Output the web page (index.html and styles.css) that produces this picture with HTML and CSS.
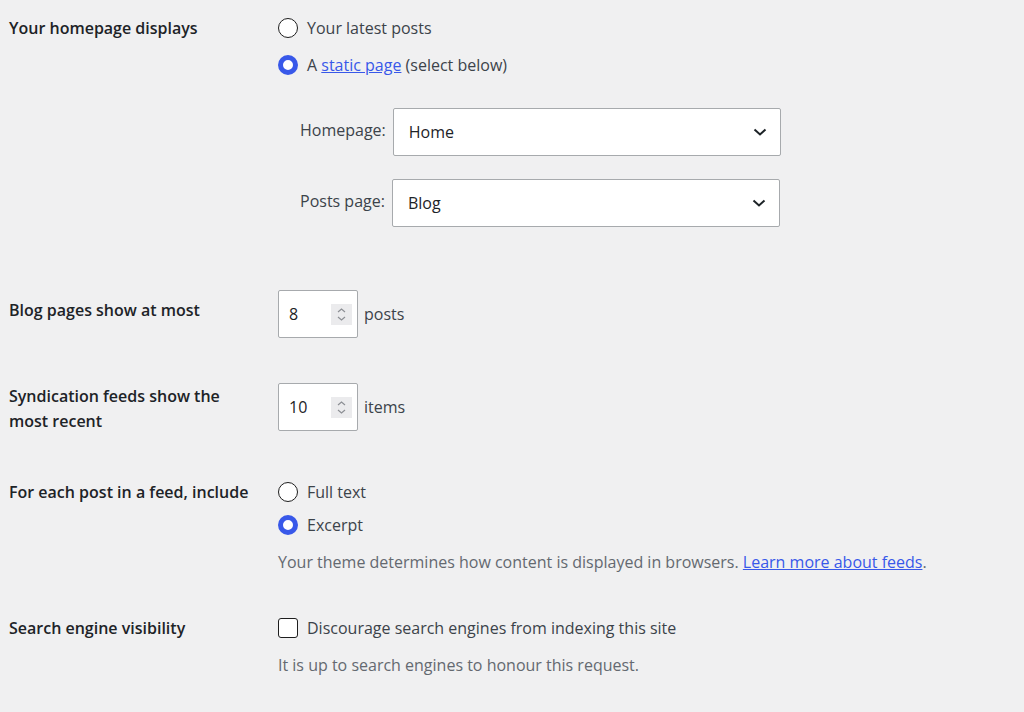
FILE: index.html
```html
<!DOCTYPE html>
<html lang="en">
<head>
    <meta charset="UTF-8">
    <title>Reading Settings</title>
    <link rel="stylesheet" href="styles.css">
</head>
<body>
    <div class="settings">

        <!-- Homepage -->
        <div class="row row-home">
            <div class="label">Your homepage displays</div>
            <div class="field">
                <div class="options">
                    <div class="option"><span class="radio"></span>Your latest posts</div>
                    <div class="option"><span class="radio checked"></span>A&nbsp;<a href="#">static page</a>&nbsp;(select below)</div>
                </div>
                <div class="page-selects">
                    <div class="page-select">
                        <span class="select-label">Homepage:</span>
                        <div class="select">
                            <span>Home</span>
                            <svg width="16" height="16" viewBox="0 0 16 16"><path d="M2.5 5.5 L8 10.5 L13.5 5.5" fill="none" stroke="#1d2327" stroke-width="2"/></svg>
                        </div>
                    </div>
                    <div class="page-select">
                        <span class="select-label">Posts page:</span>
                        <div class="select">
                            <span>Blog</span>
                            <svg width="16" height="16" viewBox="0 0 16 16"><path d="M2.5 5.5 L8 10.5 L13.5 5.5" fill="none" stroke="#1d2327" stroke-width="2"/></svg>
                        </div>
                    </div>
                </div>
            </div>
        </div>

        <!-- Blog pages -->
        <div class="row row-blog">
            <div class="label label-low">Blog pages show at most</div>
            <div class="field inline">
                <div class="number">
                    <span>8</span>
                    <span class="spinner">
                        <svg width="21" height="21" viewBox="0 0 21 21"><path d="M7 8 L10.5 5 L14 8 M7 13 L10.5 16 L14 13" fill="none" stroke="#8c8f94" stroke-width="1.2"/></svg>
                    </span>
                </div>
                <span>posts</span>
            </div>
        </div>

        <!-- Feeds -->
        <div class="row row-feeds">
            <div class="label">Syndication feeds show the most recent</div>
            <div class="field inline">
                <div class="number">
                    <span>10</span>
                    <span class="spinner">
                        <svg width="21" height="21" viewBox="0 0 21 21"><path d="M7 8 L10.5 5 L14 8 M7 13 L10.5 16 L14 13" fill="none" stroke="#8c8f94" stroke-width="1.2"/></svg>
                    </span>
                </div>
                <span>items</span>
            </div>
        </div>

        <!-- Feed content -->
        <div class="row row-include">
            <div class="label">For each post in a feed, include</div>
            <div class="field">
                <div class="options tight">
                    <div class="option"><span class="radio"></span>Full text</div>
                    <div class="option"><span class="radio checked"></span>Excerpt</div>
                </div>
                <p class="description">Your theme determines how content is displayed in browsers. <a href="#">Learn more about feeds</a>.</p>
            </div>
        </div>

        <!-- Search engines -->
        <div class="row row-search">
            <div class="label">Search engine visibility</div>
            <div class="field">
                <div class="option"><span class="checkbox"></span>Discourage search engines from indexing this site</div>
                <p class="description">It is up to search engines to honour this request.</p>
            </div>
        </div>

    </div>
</body>
</html>
```

FILE: styles.css
```css
body {
    margin: 0;
    background-color: #f0f0f1;
    color: #3c434a;
    font-family: "Open Sans", "Noto Sans", sans-serif;
    font-size: 16px;
}
a {
    color: #3858e9;
}
.settings {
    padding: 0 9px;
}
.row {
    display: grid;
    grid-template-columns: 269px 1fr;
}
.label {
    color: #1d2327;
    font-weight: 600;
    line-height: 25px;
    width: 240px;
}
.row-home {
    padding-top: 16px;
}
.row-home .label {
    line-height: 24px;
}
.row-blog {
    margin-top: 63px;
}
.label-low {
    margin-top: 8px;
}
.row-feeds {
    margin-top: 45px;
}
.row-feeds .label {
    margin-top: 1px;
}
.row-include {
    margin-top: 46px;
}
.row-include .label {
    line-height: 24px;
}
.row-search {
    margin-top: 42px;
}
.row-search .label {
    line-height: 24px;
}
.options {
    display: flex;
    flex-direction: column;
    gap: 13px;
}
.options.tight {
    gap: 9px;
}
.option {
    display: flex;
    align-items: center;
    height: 24px;
}
.radio {
    width: 20px;
    height: 20px;
    box-sizing: border-box;
    border: 1.5px solid #1e1e1e;
    border-radius: 50%;
    background: #fff;
    margin-right: 9px;
}
.radio.checked {
    border: 5.5px solid #3858e9;
}
.checkbox {
    width: 20px;
    height: 20px;
    box-sizing: border-box;
    border: 1.5px solid #1e1e1e;
    border-radius: 3px;
    background: #fff;
    margin-right: 9px;
}
.page-selects {
    display: flex;
    flex-direction: column;
    gap: 23px;
    margin-top: 31px;
    padding-left: 22px;
}
.page-select {
    display: flex;
    align-items: center;
    gap: 7px;
}
.select-label {
    position: relative;
    top: -2px;
}
.select {
    width: 388px;
    height: 48px;
    box-sizing: border-box;
    background: #fff;
    border: 1px solid #a7aaad;
    border-radius: 2px;
    display: flex;
    align-items: center;
    justify-content: space-between;
    padding: 0 12px 0 15px;
    color: #1d2327;
}
.inline {
    display: flex;
    align-items: center;
    align-self: start;
    gap: 6px;
}
.number {
    width: 80px;
    height: 48px;
    box-sizing: border-box;
    background: #fff;
    border: 1px solid #a7aaad;
    border-radius: 2px;
    display: flex;
    align-items: center;
    justify-content: space-between;
    padding: 0 5px 0 10px;
    color: #1d2327;
}
.spinner {
    width: 21px;
    height: 21px;
    background: #ebebed;
    display: flex;
}
.description {
    margin: 13px 0 0;
    line-height: 24px;
    color: #646970;
}
```
